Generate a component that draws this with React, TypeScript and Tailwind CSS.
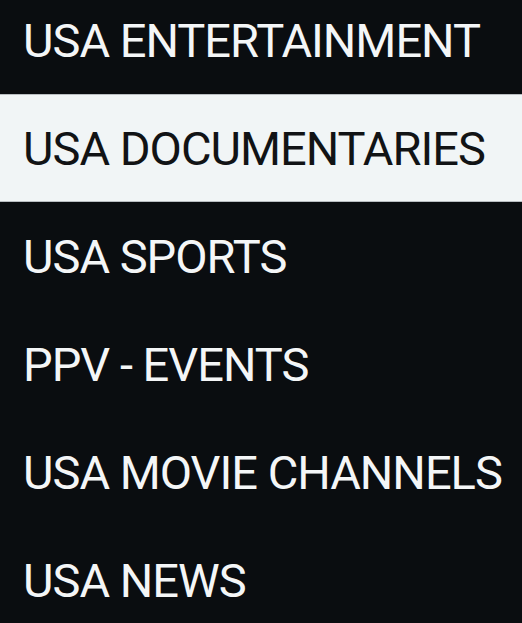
import React from "react";

const CATEGORIES = [
  "USA ENTERTAINMENT",
  "USA DOCUMENTARIES",
  "USA SPORTS",
  "PPV - EVENTS",
  "USA MOVIE CHANNELS",
  "USA NEWS",
];

const SELECTED = 1;

export default function App() {
  return (
    <div className="w-[522px] h-[623px] overflow-hidden bg-[#0a0d10] font-['Roboto',sans-serif]">
      <ul className="flex flex-col -mt-[14px]">
        {CATEGORIES.map((name, idx) => {
          const active = idx === SELECTED;
          return (
            <li
              key={name}
              className={
                active
                  ? "h-[108px] flex items-center pl-[23px] bg-[#f1f5f6] text-[#111315] border-y border-[#b9bec1]"
                  : "h-[108px] flex items-center pl-[23px] text-[#f4f6f7]"
              }
            >
              <span className="text-[47px] leading-none tracking-[-1px] whitespace-nowrap">{name}</span>
            </li>
          );
        })}
      </ul>
    </div>
  );
}
